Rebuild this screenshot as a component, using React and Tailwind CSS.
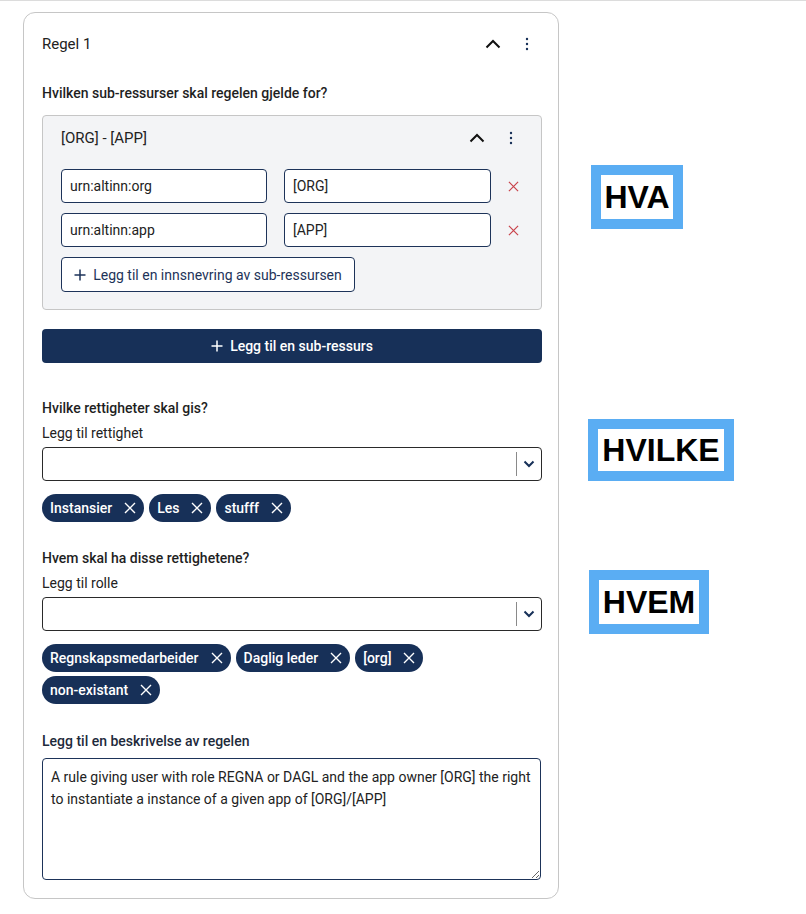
import React from "react";

const NAVY = "#173058";

function ChevronUp() {
  return (
    <svg width="16" height="10" viewBox="0 0 16 10" fill="none">
      <path d="M1.5 8.5L8 2l6.5 6.5" stroke="#111" strokeWidth="2" />
    </svg>
  );
}

function Dots() {
  return (
    <svg width="4" height="14" viewBox="0 0 4 14" fill={NAVY}>
      <circle cx="2" cy="2" r="1.2" />
      <circle cx="2" cy="7" r="1.2" />
      <circle cx="2" cy="12" r="1.2" />
    </svg>
  );
}

function ChevronDown() {
  return (
    <svg width="12" height="8" viewBox="0 0 12 8" fill="none">
      <path d="M1.5 1.5L6 6l4.5-4.5" stroke={NAVY} strokeWidth="2" />
    </svg>
  );
}

function Plus({ color }) {
  return (
    <svg width="12" height="12" viewBox="0 0 12 12" fill="none">
      <path d="M6 0.5v11M0.5 6h11" stroke={color} strokeWidth="1.5" />
    </svg>
  );
}

function SmallX({ color, size = 12, w = 1.6 }) {
  return (
    <svg width={size} height={size} viewBox="0 0 12 12" fill="none">
      <path d="M1 1l10 10M11 1L1 11" stroke={color} strokeWidth={w} />
    </svg>
  );
}

function Header({ title, pr }) {
  return (
    <div className={`flex items-center ${pr}`}>
      <span className="text-[15px] text-[#222]">{title}</span>
      <div className="ml-auto flex items-center gap-[6px]">
        <div className="w-[28px] h-[28px] flex items-center justify-center"><ChevronUp /></div>
        <div className="w-[28px] h-[28px] flex items-center justify-center"><Dots /></div>
      </div>
    </div>
  );
}

function Field({ value, w }) {
  return (
    <div className={`${w} h-[34px] border border-[#1d3359] rounded-[4px] bg-white pl-[8px] flex items-center text-sm text-[#222]`}>
      {value}
    </div>
  );
}

function Chip({ label }) {
  return (
    <div className="h-[28px] rounded-full bg-[#173058] text-white text-sm font-medium flex items-center pl-[8px] pr-[8px] gap-[12px]">
      <span>{label}</span>
      <SmallX color="#fff" size={12} w={1.4} />
    </div>
  );
}

function Select() {
  return (
    <div className="h-[34px] border border-[#2a2a2a] rounded-[4px] bg-white flex items-center justify-end">
      <div className="w-px h-[24px] bg-[#8a8a8a]" />
      <div className="w-[24px] flex items-center justify-center"><ChevronDown /></div>
    </div>
  );
}

function Tag({ text, w, h, ml, mt }) {
  return (
    <div className={`${w} ${h} ${ml} ${mt} border-[10px] border-[#5aadf3] bg-white flex items-center justify-center`}>
      <span className="font-bold text-[32px] leading-[40px] text-black" style={{ fontFamily: '"Liberation Sans", Arial, sans-serif' }}>{text}</span>
    </div>
  );
}

export default function App() {
  const rights = ["Instansier", "Les", "stufff"];
  const roles = ["Regnskapsmedarbeider", "Daglig leder", "[org]", "non-existant"];
  return (
    <div className="min-h-[914px] w-[806px] bg-white border-t border-[#dcdcdc] pt-[11px] pl-[23px] flex items-start" style={{ fontFamily: "Roboto, 'Noto Sans', sans-serif" }}>
      <div className="w-[536px] border border-[#c6c6c6] rounded-[12px] pl-[18px] pr-[16px] pb-[18px]">
        <div className="h-[62px] flex items-center">
          <div className="flex-1"><Header title="Regel 1" pr="pr-px" /></div>
        </div>
        <div className="mt-[8px] text-sm leading-5 font-medium text-[#1f1f1f]">Hvilken sub-ressurser skal regelen gjelde for?</div>

        <div className="mt-[12px] border border-[#c6c6c6] rounded-[4px] bg-[#f3f4f6] pl-[18px] pr-[6px] pb-[17px]">
          <div className="h-[44px] flex items-center">
            <div className="flex-1"><Header title="[ORG] - [APP]" pr="pr-[10px]" /></div>
          </div>
          <div className="mt-[9px] flex flex-col gap-[10px]">
            {[["urn:altinn:org", "[ORG]"], ["urn:altinn:app", "[APP]"]].map(([k, v]) => (
              <div key={k} className="flex items-center">
                <Field value={k} w="w-[206px]" />
                <div className="w-[17px]" />
                <Field value={v} w="w-[207px]" />
                <div className="w-[44px] flex items-center justify-center"><SmallX color="#c9434b" size={11} w={1.3} /></div>
              </div>
            ))}
          </div>
          <div className="mt-[10px] h-[35px] w-[294px] border border-[#1d3359] rounded-[4px] bg-white flex items-center justify-center gap-[7px] text-sm text-[#1d3359]">
            <Plus color="#1d3359" />
            <span>Legg til en innsnevring av sub-ressursen</span>
          </div>
        </div>

        <div className="mt-[19px] h-[34px] rounded-[4px] bg-[#173058] flex items-center justify-center gap-[7px] text-white text-sm font-medium">
          <Plus color="#fff" />
          <span>Legg til en sub-ressurs</span>
        </div>

        <div className="mt-[35px] text-sm leading-5 font-medium text-[#1f1f1f]">Hvilke rettigheter skal gis?</div>
        <div className="mt-[5px] text-sm leading-5 text-[#222]">Legg til rettighet</div>
        <div className="mt-[4px]"><Select /></div>
        <div className="mt-[13px] flex flex-wrap gap-[5px]">
          {rights.map((r) => <Chip key={r} label={r} />)}
        </div>

        <div className="mt-[26px] text-sm leading-5 font-medium text-[#1f1f1f]">Hvem skal ha disse rettighetene?</div>
        <div className="mt-[5px] text-sm leading-5 text-[#222]">Legg til rolle</div>
        <div className="mt-[4px]"><Select /></div>
        <div className="mt-[13px] flex flex-wrap gap-x-[5px] gap-y-[4px] w-[400px]">
          {roles.map((r) => <Chip key={r} label={r} />)}
        </div>

        <div className="mt-[27px] text-sm leading-5 font-medium text-[#1e2a3b]">Legg til en beskrivelse av regelen</div>
        <textarea
          readOnly
          value="A rule giving user with role REGNA or DAGL and the app owner [ORG] the right to instantiate a instance of a given app of [ORG]/[APP]"
          className="mt-[7px] block w-[499px] h-[122px] border border-[#1d3359] rounded-[4px] bg-white pl-[8px] pr-[8px] pt-[7px] text-sm leading-[22px] text-[#222] outline-none"
          style={{ fontFamily: "Roboto, 'Noto Sans', sans-serif" }}
        />
      </div>

      <div className="flex flex-col">
        <Tag text="HVA" w="w-[92px]" h="h-[64px]" ml="ml-[32px]" mt="mt-[153px]" />
        <Tag text="HVILKE" w="w-[146px]" h="h-[62px]" ml="ml-[29px]" mt="mt-[190px]" />
        <Tag text="HVEM" w="w-[120px]" h="h-[64px]" ml="ml-[30px]" mt="mt-[89px]" />
      </div>
    </div>
  );
}
